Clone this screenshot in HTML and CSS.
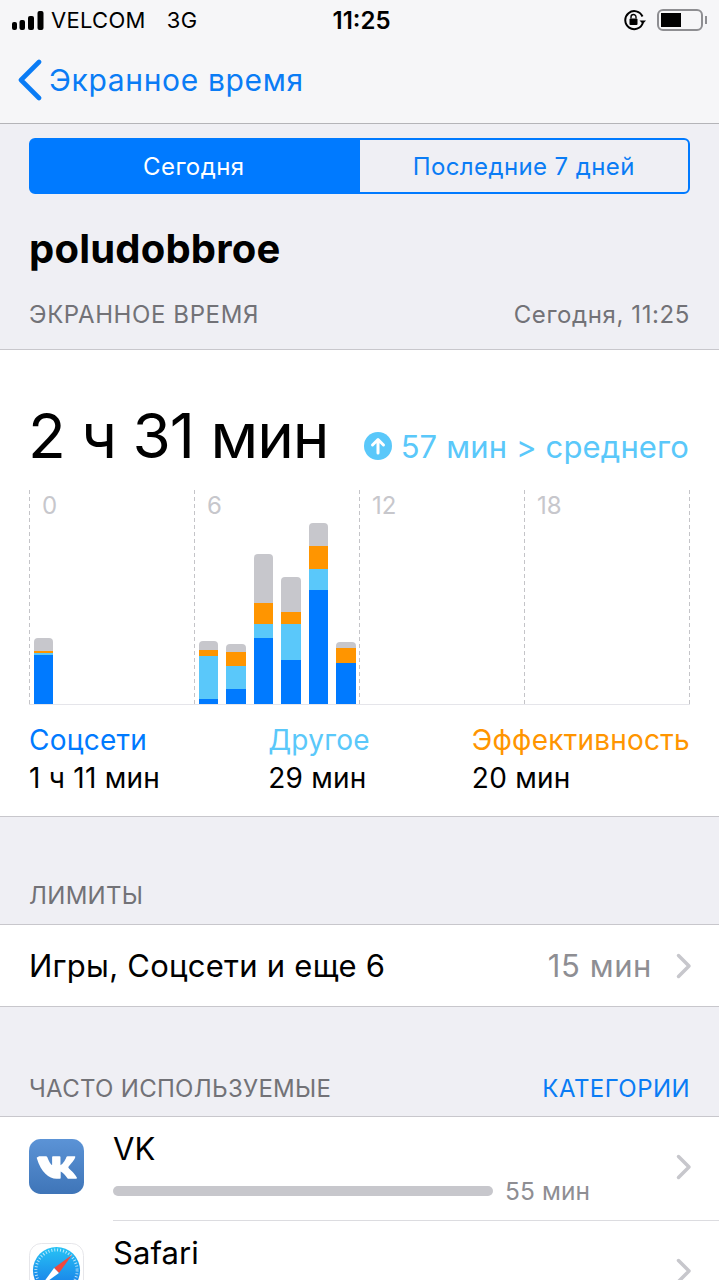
FILE: index.html
```html
<!DOCTYPE html>
<html lang="ru">
<head>
    <meta charset="UTF-8">
    <meta name="viewport" content="width=device-width, initial-scale=1.0">
    <title>Экранное время</title>
    <link rel="stylesheet" href="styles.css">
</head>
<body>
    <!-- Status bar and navigation -->
    <header class="top">
        <div class="status">
            <div class="status-left">
                <svg class="signal" width="32" height="19" viewBox="0 0 32 19">
                    <rect x="0" y="11" width="5" height="8" rx="2" />
                    <rect x="7.500" y="9" width="5.500" height="10" rx="2" />
                    <rect x="16" y="5" width="6" height="14" rx="2" />
                    <rect x="25.500" y="0" width="6" height="19" rx="2" />
                </svg>
                <span class="carrier">VELCOM</span>
                <span class="network">3G</span>
            </div>
            <div class="clock">11:25</div>
            <div class="status-right">
                <svg width="24" height="22" viewBox="0 0 24 22">
                    <path d="M19.5 7.5A9 9 0 1 0 19.8 14" fill="none" stroke="#000" stroke-width="2" />
                    <path d="M16.5 11.5h6.5l-3.2 3.6z" fill="#000" />
                    <rect x="6.5" y="9.5" width="8" height="6.5" rx="1" fill="#000" />
                    <path d="M8 9.5V8a2.5 2.5 0 0 1 5 0v1.5" fill="none" stroke="#000" stroke-width="1.4" />
                </svg>
                <div class="battery"><div class="battery-level"></div></div>
                <div class="battery-tip"></div>
            </div>
        </div>
        <nav class="nav">
            <svg width="26" height="44" viewBox="0 0 26 44">
                <path d="M23 4L5 22l18 18" fill="none" stroke="#0a7cf5" stroke-width="4.6" stroke-linecap="round" stroke-linejoin="round" />
            </svg>
            <span class="nav-title">Экранное время</span>
        </nav>
    </header>

    <div class="segments">
        <div class="segment active">Сегодня</div>
        <div class="segment">Последние 7 дней</div>
    </div>

    <h1 class="device">poludobbroe</h1>

    <div class="section-head first">
        <span>ЭКРАННОЕ ВРЕМЯ</span>
        <span>Сегодня, 11:25</span>
    </div>

    <!-- Usage card with chart -->
    <section class="card usage">
        <div class="total-row">
            <div class="total">2 ч 31 мин</div>
            <div class="delta">
                <svg width="28" height="28" viewBox="0 0 28 28">
                    <circle cx="14" cy="14" r="14" fill="#5ac8fa" />
                    <path d="M14 21V8M8.5 13L14 7.5l5.500 5.500" fill="none" stroke="#fff" stroke-width="3" stroke-linecap="round" stroke-linejoin="round" />
                </svg>
                <span>57 мин &gt; среднего</span>
            </div>
        </div>

        <div class="chart">
            <div class="chart-col">
                <span class="hour">0</span>
                <div class="bars">
                    <div class="bar">
                        <i class="gray" style="height:13px"></i>
                        <i class="orange" style="height:2px"></i>
                        <i class="light" style="height:2px"></i>
                        <i class="blue" style="height:49px"></i>
                    </div>
                </div>
            </div>
            <div class="chart-col">
                <span class="hour">6</span>
                <div class="bars">
                    <div class="bar">
                        <i class="gray" style="height:9px"></i>
                        <i class="orange" style="height:6px"></i>
                        <i class="light" style="height:43px"></i>
                        <i class="blue" style="height:5px"></i>
                    </div>
                    <div class="bar">
                        <i class="gray" style="height:8px"></i>
                        <i class="orange" style="height:14px"></i>
                        <i class="light" style="height:23px"></i>
                        <i class="blue" style="height:15px"></i>
                    </div>
                    <div class="bar">
                        <i class="gray" style="height:49px"></i>
                        <i class="orange" style="height:21px"></i>
                        <i class="light" style="height:14px"></i>
                        <i class="blue" style="height:66px"></i>
                    </div>
                    <div class="bar">
                        <i class="gray" style="height:35px"></i>
                        <i class="orange" style="height:12px"></i>
                        <i class="light" style="height:36px"></i>
                        <i class="blue" style="height:44px"></i>
                    </div>
                    <div class="bar">
                        <i class="gray" style="height:23px"></i>
                        <i class="orange" style="height:23px"></i>
                        <i class="light" style="height:21px"></i>
                        <i class="blue" style="height:114px"></i>
                    </div>
                    <div class="bar">
                        <i class="gray" style="height:6px"></i>
                        <i class="orange" style="height:15px"></i>
                        <i class="blue" style="height:41px"></i>
                    </div>
                </div>
            </div>
            <div class="chart-col">
                <span class="hour">12</span>
            </div>
            <div class="chart-col last">
                <span class="hour">18</span>
            </div>
        </div>

        <div class="legend">
            <div>
                <div class="social">Соцсети</div>
                <div>1 ч 11 мин</div>
            </div>
            <div class="legend-mid">
                <div class="other">Другое</div>
                <div>29 мин</div>
            </div>
            <div>
                <div class="work">Эффективность</div>
                <div>20 мин</div>
            </div>
        </div>
    </section>

    <div class="section-head tight limits-head">
        <span>ЛИМИТЫ</span>
    </div>
    <section class="card limit-row">
        <span class="limit-name">Игры, Соцсети и еще 6</span>
        <span class="limit-time">15 мин</span>
        <svg class="chevron" width="16" height="26" viewBox="0 0 16 26">
            <path d="M2.500 2.500L13 13 2.500 23.500" />
        </svg>
    </section>

    <div class="section-head tight apps-head">
        <span>ЧАСТО ИСПОЛЬЗУЕМЫЕ</span>
        <span class="link">КАТЕГОРИИ</span>
    </div>
    <section class="card apps">
        <div class="app">
            <svg class="app-icon" width="55" height="55" viewBox="0 0 56 56">
                <defs>
                    <linearGradient id="vkBg" x1="0" y1="0" x2="0" y2="1">
                        <stop offset="0" stop-color="#5b93d6" />
                        <stop offset="1" stop-color="#3f75b8" />
                    </linearGradient>
                </defs>
                <rect width="56" height="56" rx="12" fill="url(#vkBg)" />
                <path transform="translate(1.600 -.5) scale(1.08 1)" d="M8 18h6.500c.6 0 1 .3 1.200 .9 1.500 4.500 3.300 7.500 4.600 8.300V18.800c0-.5 .3-.8 .8-.8h6.200c.6 0 .9 .3 .9 .9v8.300c1.400-.5 4.400-4.300 5.600-8.300 .2-.6 .6-.9 1.200-.9h6.200c.9 0 1.100 .5 .9 1.200-1 3.700-5.600 8.300-6.300 9.500-.3 .6-.3 .9 .1 1.400 1.100 1.500 5.200 5 7.700 9.700 .4 .8 0 1.200-.8 1.200h-6.600c-.8 0-1.100-.3-1.600-.9-1.800-2.500-4.400-5.600-6.200-6.500v6.400c0 .6-.4 1-1 1h-3c-7 0-14.500-6.500-18.500-20.900-.2-.7 .1-1.100 .6-1.100z" fill="#fff" />
            </svg>
            <div class="app-main">
                <div class="app-body">
                    <div class="app-name">VK</div>
                    <div class="usage-line">
                        <div class="usage-bar"></div>
                        <span class="usage-time">55 мин</span>
                    </div>
                </div>
                <svg class="chevron" width="16" height="26" viewBox="0 0 16 26">
                    <path d="M2.500 2.500L13 13 2.500 23.500" />
                </svg>
            </div>
        </div>
        <div class="app">
            <svg class="app-icon" width="55" height="55" viewBox="0 0 56 56">
                <defs>
                    <linearGradient id="safariBg" x1="0" y1="0" x2="0" y2="1">
                        <stop offset="0" stop-color="#27c3f5" />
                        <stop offset="1" stop-color="#1673e6" />
                    </linearGradient>
                </defs>
                <rect x=".5" y=".5" width="55" height="55" rx="12" fill="#fff" stroke="#e6e6ea" />
                <circle cx="28" cy="28" r="24" fill="url(#safariBg)" />
                <circle cx="28" cy="28" r="21" fill="none" stroke="#fff" stroke-opacity=".7" stroke-width="3" stroke-dasharray="1 2" />
                <path d="M44 12L25.500 25.500l5 5z" fill="#f0483e" />
                <path d="M12 44l13.500-18.500 5 5z" fill="#fff" />
            </svg>
            <div class="app-main">
                <div class="app-body">
                    <div class="app-name">Safari</div>
                </div>
                <svg class="chevron" width="16" height="26" viewBox="0 0 16 26">
                    <path d="M2.500 2.500L13 13 2.500 23.500" />
                </svg>
            </div>
        </div>
    </section>
</body>
</html>
```

FILE: styles.css
```css
/* Reset default browser styles */
* {
    box-sizing: border-box;
    margin: 0;
    padding: 0;
}

html, body {
    height: 1280px;
    overflow: hidden;
}

body {
    font-family: Inter, "Noto Sans", sans-serif;
    background-color: #efeff4;
    color: #000;
}

/* Status bar and navigation */
.top {
    height: 124px;
    background-color: #f6f6f8;
    border-bottom: 1px solid #b4b4b8;
}

.status {
    height: 40px;
    padding: 0 12px;
    display: flex;
    align-items: center;
    font-size: 22px;
}

.status-left {
    display: flex;
    align-items: center;
    flex: 1;
}

.signal {
    fill: #000;
    margin-right: 7px;
}

.carrier {
    letter-spacing: 0.3px;
}

.network {
    margin-left: 21px;
    letter-spacing: 0.3px;
}

.clock {
    margin-left: 4px;
    font-weight: 600;
    font-size: 24px;
}

.status-right {
    flex: 1;
    display: flex;
    align-items: center;
    justify-content: flex-end;
}

.battery {
    width: 46px;
    height: 22px;
    margin-left: 10px;
    padding: 2px;
    border: 2px solid #8e8e92;
    border-radius: 6px;
}

.battery-level {
    width: 20px;
    height: 100%;
    background-color: #000;
}

.battery-tip {
    width: 2px;
    height: 8px;
    margin-left: 2px;
    background-color: #8e8e92;
}

.nav {
    height: 83px;
    padding: 0 0 4px 16px;
    display: flex;
    align-items: center;
    color: #0a7cf5;
}

.nav-title {
    margin-left: 7px;
    font-size: 30px;
    letter-spacing: 0.65px;
}

/* Segmented control */
.segments {
    margin: 14px 29px 0 29px;
    height: 56px;
    display: flex;
    border: 2px solid #007aff;
    border-radius: 6px;
    color: #0a7cf5;
    font-size: 24px;
    letter-spacing: 0.4px;
}

.segment {
    width: 50%;
    display: flex;
    align-items: center;
    justify-content: center;
}

.segment.active {
    padding-right: 3px;
    background-color: #007aff;
    color: #fff;
}

.device {
    margin: 32px 0 0 29px;
    height: 45px;
    font-size: 40px;
    line-height: 46px;
    font-weight: 700;
    letter-spacing: 0.2px;
}

/* Section headings */
.section-head {
    display: flex;
    justify-content: space-between;
    padding: 0 29px;
    font-size: 24px;
    line-height: 30px;
    letter-spacing: 0.6px;
    color: #727277;
}

.section-head.tight {
    letter-spacing: 0.3px;
}

.section-head.first {
    margin-top: 29px;
    height: 49px;
}

.limits-head {
    margin-top: 64px;
    height: 43px;
}

.apps-head {
    margin-top: 67px;
    height: 42px;
}

.link {
    color: #0a7cf5;
    letter-spacing: 0.45px;
}

/* White cards */
.card {
    background-color: #fff;
    border-top: 1px solid #c8c7cc;
    border-bottom: 1px solid #c8c7cc;
}

.usage {
    height: 468px;
    padding: 0 29px;
}

.total-row {
    height: 140px;
    display: flex;
    align-items: center;
    justify-content: space-between;
    padding-top: 30px;
}

.total {
    margin-left: -1px;
    font-size: 62px;
    letter-spacing: -1px;
}

.delta {
    display: flex;
    align-items: center;
    gap: 9px;
    margin: 22px 1px 0 0;
    color: #5ac8fa;
    font-size: 31px;
    letter-spacing: 0.15px;
}

/* Chart */
.chart {
    height: 215px;
    display: grid;
    grid-template-columns: 165px 165px 165px 166px;
    border-bottom: 1px solid #e5e5ea;
}

.chart-col {
    position: relative;
    padding-left: 4.500px;
    display: flex;
    align-items: flex-end;
    background-image: repeating-linear-gradient(to bottom, #c4c4c8 0 4px, transparent 4px 7px);
    background-size: 1px 100%;
    background-repeat: no-repeat;
    background-position: left top;
}

.chart-col.last {
    background-image:
        repeating-linear-gradient(to bottom, #c4c4c8 0 4px, transparent 4px 7px),
        repeating-linear-gradient(to bottom, #c4c4c8 0 4px, transparent 4px 7px);
    background-position: left top, right top;
}

.hour {
    position: absolute;
    top: 1px;
    left: 13px;
    font-size: 24px;
    color: #c7c7cc;
}

.bars {
    display: flex;
    align-items: flex-end;
    gap: 8px;
}

.bar {
    width: 19.500px;
    display: flex;
    flex-direction: column;
    border-radius: 4px 4px 0 0;
    overflow: hidden;
}

.bar i {
    display: block;
}

.gray {
    background-color: #c7c7cc;
}

.orange {
    background-color: #ff9500;
}

.light {
    background-color: #5ac8fa;
}

.blue {
    background-color: #007aff;
}

.legend {
    display: flex;
    justify-content: space-between;
    margin-top: 16px;
    font-size: 28px;
    line-height: 38px;
    letter-spacing: 0.25px;
}

.legend-mid {
    margin-left: 6px;
}

.social {
    color: #007aff;
}

.other {
    color: #5ac8fa;
}

.work {
    color: #ff9500;
}

/* Limit row */
.limit-row {
    height: 83px;
    padding: 0 27px 0 29px;
    display: flex;
    align-items: center;
    font-size: 31px;
    letter-spacing: 0.25px;
}

.limit-name {
    flex: 1;
}

.limit-time {
    color: #8e8e93;
    margin-right: 24px;
    letter-spacing: 0.6px;
}

.chevron {
    flex: none;
    fill: none;
    stroke: #c7c7cc;
    stroke-width: 3.500;
    stroke-linecap: round;
    stroke-linejoin: round;
}

/* App list */
.apps {
    padding-left: 29px;
    border-bottom: none;
}

.app {
    height: 104px;
    display: flex;
}

.app-icon {
    flex: none;
    margin: 22px 29px 0 0;
}

.app-main {
    flex: 1;
    display: flex;
    align-items: center;
    padding: 0 27px 4px 0;
    border-bottom: 1px solid #dcdce0;
}

.app-body {
    flex: 1;
    height: 100%;
    padding-top: 14px;
    font-size: 31px;
    line-height: 36px;
    letter-spacing: 0.1px;
}

.app-name {
    height: 36px;
}

.usage-line {
    display: flex;
    align-items: center;
    margin-top: 6px;
}

.usage-bar {
    width: 380px;
    height: 10px;
    border-radius: 5px;
    background-color: #c7c7cc;
}

.usage-time {
    margin-left: 12px;
    font-size: 24.500px;
    color: #8e8e93;
}
```
